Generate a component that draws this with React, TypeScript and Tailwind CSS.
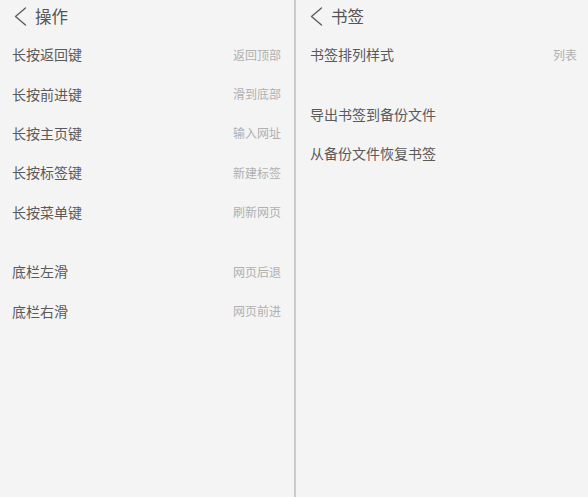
const font = { fontFamily: '"Noto Sans CJK SC", "Noto Sans", sans-serif' };

function Chevron() {
  return (
    <svg width="13" height="19" viewBox="0 0 13 19" className="shrink-0">
      <path d="M11.5 1 L1.5 9.5 L11.5 18" fill="none" stroke="#5e5e5e" strokeWidth="1.4" strokeLinecap="round" strokeLinejoin="round" />
    </svg>
  );
}

function Header({ title, pl }: { title: string; pl: string }) {
  return (
    <div className={`flex h-[35px] items-center gap-[8px] pb-[3px] ${pl}`}>
      <Chevron />
      <span className="text-[16.5px] text-[#555]">{title}</span>
    </div>
  );
}

function Row({ label, value, pr }: { label: string; value?: string; pr: string }) {
  return (
    <div className={`flex h-[39.4px] items-center justify-between pl-[12px] ${pr}`}>
      <span className="text-[14px] text-[#5a5a5a]">{label}</span>
      {value && <span className="text-[12px] text-[#b0b0b0]">{value}</span>}
    </div>
  );
}

export default function App() {
  return (
    <div className="flex h-[497px] w-[588px] bg-[#f4f4f4]" style={font}>
      <div className="w-[294px] shrink-0">
        <Header title="操作" pl="pl-[14px]" />
        <Row label="长按返回键" value="返回顶部" pr="pr-[13px]" />
        <Row label="长按前进键" value="滑到底部" pr="pr-[13px]" />
        <Row label="长按主页键" value="输入网址" pr="pr-[13px]" />
        <Row label="长按标签键" value="新建标签" pr="pr-[13px]" />
        <Row label="长按菜单键" value="刷新网页" pr="pr-[13px]" />
        <div className="h-[20px]" />
        <Row label="底栏左滑" value="网页后退" pr="pr-[13px]" />
        <Row label="底栏右滑" value="网页前进" pr="pr-[13px]" />
      </div>
      <div className="w-[2px] shrink-0 bg-[#cacaca]" />
      <div className="flex-1 pl-[2px]">
        <Header title="书签" pl="pl-[12px]" />
        <Row label="书签排列样式" value="列表" pr="pr-[11px]" />
        <div className="h-[20px]" />
        <Row label="导出书签到备份文件" pr="pr-[11px]" />
        <Row label="从备份文件恢复书签" pr="pr-[11px]" />
      </div>
    </div>
  );
}
